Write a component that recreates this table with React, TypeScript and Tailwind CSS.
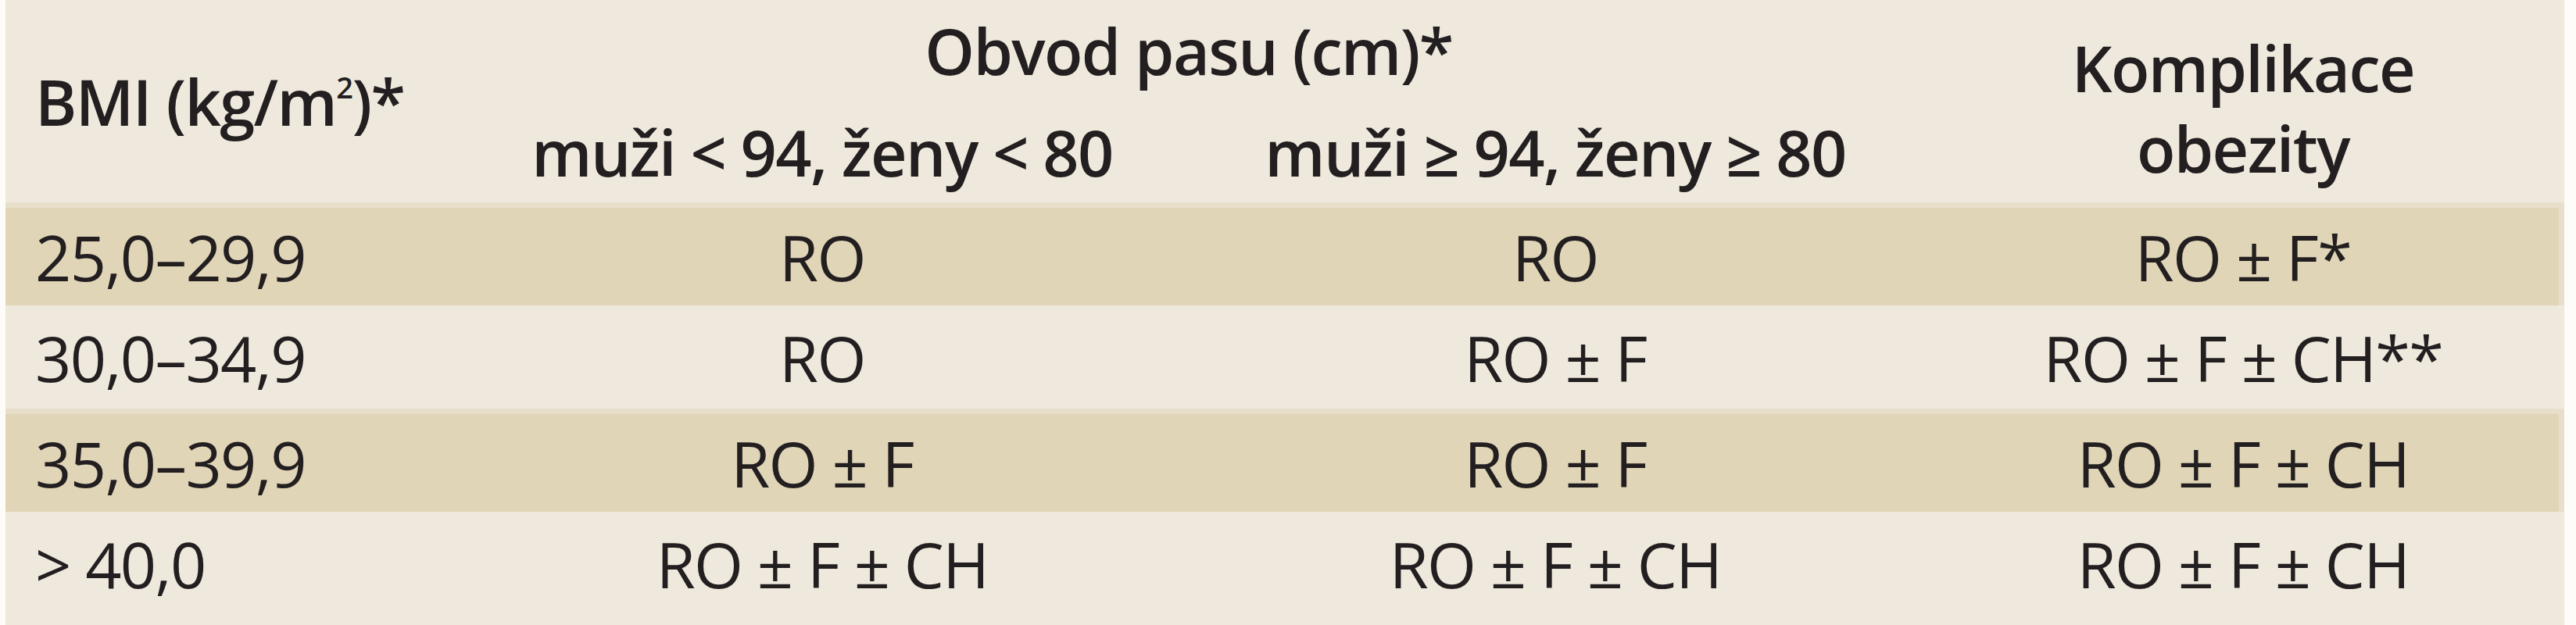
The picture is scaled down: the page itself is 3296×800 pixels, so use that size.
import React from 'react'

const rows = [
  ['25,0–29,9', 'RO', 'RO', 'RO ± F*'],
  ['30,0–34,9', 'RO', 'RO ± F', 'RO ± F ± CH**'],
  ['35,0–39,9', 'RO ± F', 'RO ± F', 'RO ± F ± CH'],
  ['> 40,0', 'RO ± F ± CH', 'RO ± F ± CH', 'RO ± F ± CH'],
]

const cols = 'grid grid-cols-[576px_938px_938px_822px]'

export default function App() {
  return (
    <div className="h-[800px] w-[3296px] bg-[#fdfcf9] pl-[7px] pr-[15px] font-['Open_Sans',sans-serif] tracking-[-1.6px] text-[#231f20]">
      <div className="h-full bg-[#efe9dd]">
        {/* header */}
        <div className={`${cols} grid-rows-[128px_131px] text-[81px] font-semibold leading-none`}>
          <div className="row-span-2 flex items-center pl-[38px]">
            BMI (kg/m<sup className="text-[38px]">2</sup>)*
          </div>
          <div className="col-span-2 flex items-center justify-center">Obvod pasu (cm)*</div>
          <div className="row-span-2 flex flex-col items-center justify-center gap-[22px] pt-[16px] text-center">
            <span>Komplikace</span>
            <span>obezity</span>
          </div>
          <div className="flex items-center justify-center pt-[2px]">muži &lt; 94, ženy &lt; 80</div>
          <div className="flex items-center justify-center pt-[2px]">muži ≥ 94, ženy ≥ 80</div>
        </div>

        {/* body */}
        {rows.map((r, i) => (
          <div
            key={i}
            className={`${cols} h-[132px] text-[81px] leading-none ${
              i % 2 === 0 ? 'border-t-[7px] border-r-[7px] border-[#e8dfca] bg-[#e0d5b7]' : ''
            }`}
          >
            <div className="flex items-center pl-[38px]">{r[0]}</div>
            <div className="flex items-center justify-center">{r[1]}</div>
            <div className="flex items-center justify-center">{r[2]}</div>
            <div className="flex items-center justify-center">{r[3]}</div>
          </div>
        ))}
      </div>
    </div>
  )
}
